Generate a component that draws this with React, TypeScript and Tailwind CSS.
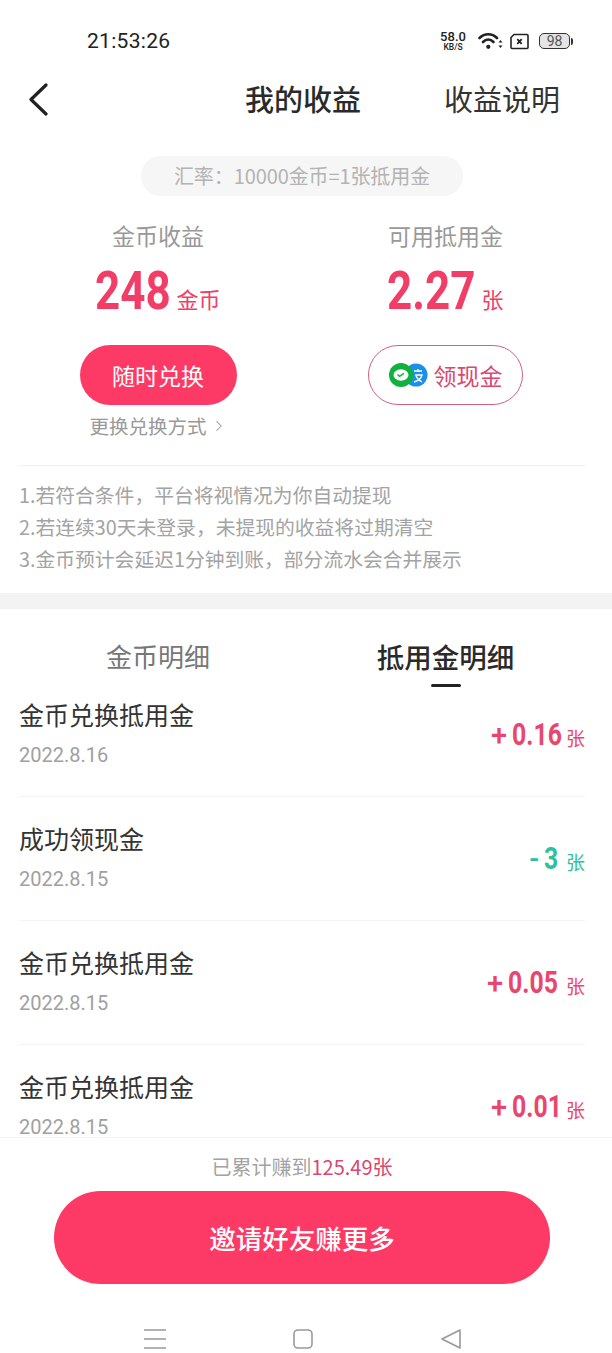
import React from 'react';
import { ChevronRight } from 'lucide-react';

const CN = { fontFamily: '"Noto Sans CJK SC", "Noto Sans", sans-serif' };
const NUM = { fontFamily: 'Roboto, "Liberation Sans", sans-serif' };

const records = [
  { title: '金币兑换抵用金', date: '2022.8.16', sign: '+', value: '0.16', up: true, width: 'w-[47px]' },
  { title: '成功领现金', date: '2022.8.15', sign: '-', value: '3', up: false, width: 'w-[15px]' },
  { title: '金币兑换抵用金', date: '2022.8.15', sign: '+', value: '0.05', up: true, width: 'w-[51px]' },
  { title: '金币兑换抵用金', date: '2022.8.15', sign: '+', value: '0.01', up: true, width: 'w-[47px]' },
];

function StatusBar() {
  return (
    <div className="flex h-[66px] shrink-0 items-center pl-[87px] pr-[39px] pt-[16px] text-[#222]">
      <span className="mt-[2px] text-[21px] tracking-[0.3px]" style={NUM}>21:53:26</span>
      <div className="ml-auto flex items-center">
        <div className="flex w-[30px] flex-col items-center font-medium leading-none" style={NUM}>
          <span className="text-[13px] leading-[11px]">58.0</span>
          <span className="text-[8.5px] leading-[10px]">KB/S</span>
        </div>
        <svg className="ml-[10px]" width="25" height="18" viewBox="0 0 25 18" fill="none" stroke="#222" strokeWidth="2.6" strokeLinecap="round">
          <path d="M1.5 6C6.5 1 14 1 19 6" />
          <path d="M5 10C8.2 6.6 12.3 6.6 15.5 10" />
          <circle cx="10.3" cy="14.8" r="2.1" fill="#222" stroke="none" />
          <path d="M22.500 8l-2 2.400h4zM22.500 16l-2-2.400h4z" fill="#222" stroke="none" />
        </svg>
        <svg className="ml-[7px]" width="19" height="17" viewBox="0 0 19 17" fill="none">
          <path d="M4 1.5h13a1 1 0 0 1 1 1v12a1 1 0 0 1-1 1H2a1 1 0 0 1-1-1V4.5z" stroke="#222" strokeWidth="1.6" />
          <path d="M7.3 6.2l4.4 4.6M11.7 6.2l-4.4 4.6" stroke="#222" strokeWidth="1.9" />
        </svg>
        <div className="ml-[10px] flex items-center">
          <div className="flex h-[16px] w-[31px] items-center justify-center rounded-[5px] border border-[#333] bg-[#e4e4e4] text-[14px] text-[#555]" style={NUM}>98</div>
          <div className="ml-[1px] h-[7px] w-[2px] rounded-r-sm bg-[#333]" />
        </div>
      </div>
    </div>
  );
}

function PayIcons() {
  return (
    <svg width="39" height="24" viewBox="0 0 39 24">
      <circle cx="27" cy="12" r="11.5" fill="#1c8fe8" />
      <path d="M25 8h8M29 6v3M26 12h7c-1 4-4 6-8 7M27 13c1.500 3 3.500 5 6 6" stroke="#fff" strokeWidth="1.300" fill="none" />
      <circle cx="12" cy="12" r="12" fill="#10b13d" />
      <ellipse cx="12" cy="12" rx="7.500" ry="5.800" fill="#fff" />
      <path d="M8.500 11.500l2 1.800 4.500-3" stroke="#10b13d" strokeWidth="1.500" fill="none" />
    </svg>
  );
}

function Summary() {
  return (
    <div className="flex shrink-0 flex-col">
      <div className="flex justify-center pt-[24px] pr-[8px]">
        <div className="flex h-[40px] w-[322px] items-center justify-center rounded-full bg-[#f6f6f6] text-[20px] tracking-[-0.1px] text-[#b3b3b3]">
          汇率：10000金币=1张抵用金
        </div>
      </div>
      <div className="grid grid-cols-[316px_259px] pt-[19px]">
        <div className="flex flex-col items-center">
          <div className="text-[23px] leading-[40px] text-[#999]">金币收益</div>
          <div className="flex h-[72px] items-center text-[#f23d67]">
            <span className="w-[74px] origin-left scale-x-[0.83] whitespace-nowrap text-[53px] font-bold leading-none" style={NUM}>248</span>
            <span className="ml-[7px] mt-[14px] text-[22px] leading-none">金币</span>
          </div>
          <button className="mt-[18px] h-[60px] w-[157px] rounded-full bg-[#fd3a66] text-[23px] text-white">随时兑换</button>
          <div className="mt-[6px] flex h-[30px] items-center pl-[1px] text-[19.500px] text-[#999]">
            更换兑换方式
            <ChevronRight className="ml-[3px] h-[18px] w-[18px]" strokeWidth={1.4} />
          </div>
        </div>
        <div className="flex flex-col items-center">
          <div className="text-[23px] leading-[40px] text-[#999]">可用抵用金</div>
          <div className="flex h-[72px] items-center text-[#f23d67]">
            <span className="w-[86px] origin-left scale-x-[0.83] whitespace-nowrap text-[53px] font-bold leading-none" style={NUM}>2.27</span>
            <span className="ml-[8px] mt-[14px] text-[22px] leading-none">张</span>
          </div>
          <button className="mt-[18px] flex h-[60px] w-[155px] items-center justify-center gap-[6px] rounded-full border border-[#d0627f] text-[23px] text-[#d9486f]">
            <PayIcons />
            领现金
          </button>
        </div>
      </div>
      <div className="ml-[19px] mr-[27px] mt-[24px] border-t border-[#f0f0f0] pt-[13px] pb-[18px] text-[19.800px] leading-[32px] text-[#a3a3a3]">
        <div>1.若符合条件，平台将视情况为你自动提现</div>
        <div>2.若连续30天未登录，未提现的收益将过期清空</div>
        <div>3.金币预计会延迟1分钟到账，部分流水会合并展示</div>
      </div>
      <div className="h-[16px] bg-[#f3f3f3]" />
    </div>
  );
}

function Tabs() {
  return (
    <div className="grid h-[76px] shrink-0 grid-cols-[316px_259px] text-center">
      <div className="pt-[29px] text-[26px] leading-[36px] text-[#777]">金币明细</div>
      <div className="flex flex-col items-center pt-[29px]">
        <div className="text-[27.500px] font-medium leading-[36px] text-[#2a2a2a]">抵用金明细</div>
        <div className="mt-[10px] h-[3px] w-[30px] rounded-full bg-[#222]" />
      </div>
    </div>
  );
}

function RecordRow({ item }: { item: (typeof records)[number] }) {
  const color = item.up ? 'text-[#e9466f]' : 'text-[#2fc0a0]';
  return (
    <div className="ml-[19px] mr-[27px] flex shrink-0 items-start justify-between border-b border-[#f4f4f4] pt-[20px] pb-[23px] first:pt-[8px]">
      <div>
        <div className="text-[25px] leading-[42px] text-[#333]">{item.title}</div>
        <div className="mt-[2px] text-[20px] leading-[36px] text-[#a0a0a0]" style={NUM}>{item.date}</div>
      </div>
      <div className={`mt-[22px] flex items-center ${color}`}>
        <span className="text-[29px] font-medium leading-[40px]" style={NUM}>{item.sign}</span>
        <span className={`ml-[5px] origin-left scale-x-[0.8] whitespace-nowrap text-[31px] font-bold leading-[40px] ${item.width}`} style={NUM}>{item.value}</span>
        <span className="ml-[7px] mt-[4px] text-[19px] leading-none">张</span>
      </div>
    </div>
  );
}

export default function App() {
  return (
    <div className="flex h-[1353px] w-[612px] flex-col overflow-hidden bg-white" style={CN}>
      <StatusBar />
      <div className="flex h-[66px] shrink-0 items-center pl-[28px] pr-[52px]">
        <svg width="20" height="33" viewBox="0 0 20 33" fill="none" stroke="#222" strokeWidth="3.200" strokeLinecap="round" strokeLinejoin="round">
          <path d="M18 2L3 16.500 18 31" />
        </svg>
        <div className="ml-[197px] text-[29px] font-medium text-[#2a2a2a]">我的收益</div>
        <div className="ml-auto text-[29px] text-[#333]">收益说明</div>
      </div>
      <Summary />
      <Tabs />
      <div className="flex min-h-0 flex-1 flex-col overflow-hidden">
        {records.map((item, i) => (
          <RecordRow key={i} item={item} />
        ))}
      </div>
      <div className="flex h-[216px] shrink-0 flex-col items-center border-t border-[#f4f4f4] bg-white pr-[8px]">
        <div className="pt-[14px] text-[20px] leading-[30px] text-[#a3a3a3]">
          已累计赚到<span className="text-[#d9486f]">125.49张</span>
        </div>
        <button className="mt-[9px] h-[93px] w-[496px] rounded-full bg-[#fd3a66] text-[26.500px] font-medium text-white">邀请好友赚更多</button>
        <div className="mt-[44px] flex w-[317px] items-center justify-between">
          <svg width="22" height="22" viewBox="0 0 22 22" stroke="#999" strokeWidth="1.600">
            <path d="M0 2h22M0 11h22M0 20h22" />
          </svg>
          <svg width="20" height="22" viewBox="0 0 20 22" fill="none" stroke="#999" strokeWidth="1.600">
            <rect x="1" y="2" width="18" height="18" rx="4" />
          </svg>
          <svg width="20" height="22" viewBox="0 0 20 22" fill="none" stroke="#999" strokeWidth="1.600" strokeLinejoin="round">
            <path d="M19 2v18L1 11z" />
          </svg>
        </div>
      </div>
    </div>
  );
}
